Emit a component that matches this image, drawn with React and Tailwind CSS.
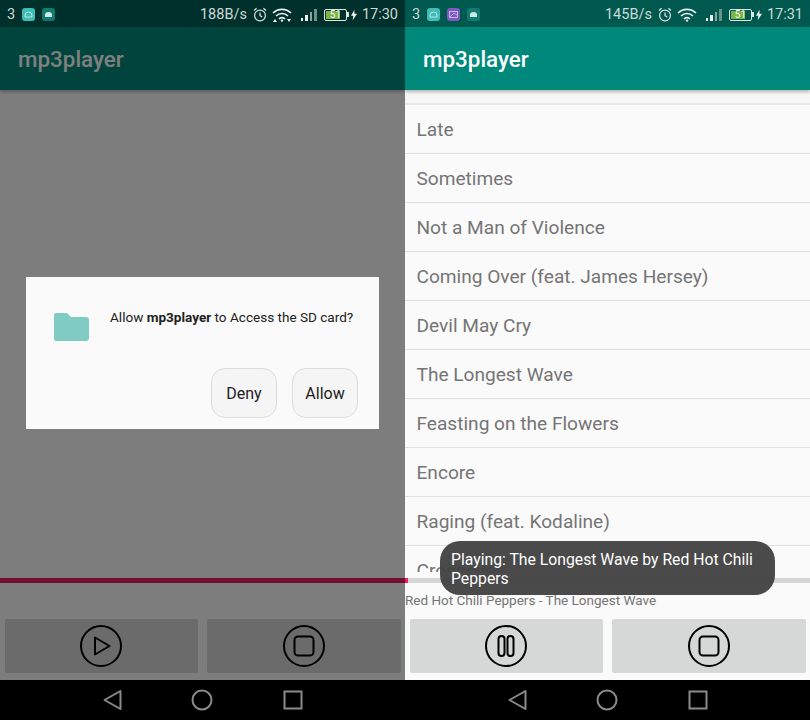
const SONGS = [
  'Late',
  'Sometimes',
  'Not a Man of Violence',
  'Coming Over (feat. James Hersey)',
  'Devil May Cry',
  'The Longest Wave',
  'Feasting on the Flowers',
  'Encore',
  'Raging (feat. Kodaline)',
  'Crossover',
]

function AppBadge({ color, children }) {
  return (
    <span className={`w-[13px] h-[13px] rounded-[3px] flex items-center justify-center ${color}`}>
      <svg width="9" height="7" viewBox="0 0 9 7">{children}</svg>
    </span>
  )
}

const CloudBadge = () => (
  <AppBadge color="bg-[#3fbcb5]">
    <path d="M1 6V4a3.5 3 0 0 1 7 0v2z" fill="none" stroke="#d8f2f0" strokeWidth="0.8" />
  </AppBadge>
)
const PhotoBadge = () => (
  <AppBadge color="bg-[#7e57c2]">
    <rect x="0.5" y="0.5" width="8" height="6" fill="none" stroke="#d8cdf0" strokeWidth="0.8" />
    <path d="M1 6l4-4 3 2" fill="none" stroke="#d8cdf0" strokeWidth="0.7" />
  </AppBadge>
)
const DroidBadge = () => (
  <AppBadge color="bg-[#127a70]">
    <path d="M1 6V4a3.5 3 0 0 1 7 0v2z" fill="#cfe9e5" />
  </AppBadge>
)

function StatusBar({ speed, time, badges, bg, activity }) {
  return (
    <div className={`h-[27px] pt-[2px] flex items-center justify-between px-[7px] text-[14.5px] text-[#cfd8d6] ${bg}`}>
      <div className="flex items-center gap-[7px]">
        <span>3</span>
        {badges.map((Badge, i) => (
          <Badge key={i} />
        ))}
      </div>
      <div className="flex items-center">
        <span>{speed}</span>
        <svg className="ml-[6px]" width="14" height="15" viewBox="0 0 14 15" fill="none" stroke="#dfe6e4" strokeWidth="1.2">
          <circle cx="7" cy="8.5" r="5.4" />
          <path d="M7 5.5v3.2l2.2 1.2M1 3.5l2.6-2.2M13 3.5l-2.6-2.2" />
        </svg>
        <svg className="ml-[5px]" width="20" height="14" viewBox="0 0 20 14" fill="none" stroke="#eef2f1" strokeWidth="1.6">
          <path d="M1 5a13 13 0 0 1 18 0M4 8a8.5 8.5 0 0 1 12 0M7 11a4 4 0 0 1 6 0" />
          <circle cx="10" cy="12.6" r="1.2" fill="#eef2f1" stroke="none" />
          {activity && <path d="M1 14l2-3 2 3zM15 11l2 3 2-3z" fill="#eef2f1" stroke="none" />}
        </svg>
        <span className="ml-[9px] flex items-end gap-[2px] h-[13px]">
          <i className="w-[2.5px] h-[3px] bg-[#eef2f1]" />
          <i className="w-[2.5px] h-[6px] bg-[#eef2f1]" />
          <i className="w-[2.5px] h-[9px] bg-[#8aa5a0]" />
          <i className="w-[2.5px] h-[12px] bg-[#6d8f89]" />
        </span>
        <span className="ml-[7px] w-[23px] h-[12px] border border-[#dfe6e4] rounded-[2px] p-[1px] flex relative">
          <span className="w-[14px] bg-[#7cb342]" />
          <span className="absolute inset-0 text-[10px] leading-[10px] text-center text-[#f5f5f5]">51</span>
        </span>
        <span className="w-[2px] h-[5px] bg-[#dfe6e4]" />
        <svg className="ml-[2px]" width="6" height="12" viewBox="0 0 7 12">
          <path d="M4 0L0 7h2.6L2 12l5-7.5H4z" fill="#eef2f1" />
        </svg>
        <span className="ml-[5px]">{time}</span>
      </div>
    </div>
  )
}

function AppBar() {
  return (
    <div className="h-[63px] pt-[2px] flex items-center pl-[18px] bg-[#00897b] shadow-[0_2px_3px_rgba(0,0,0,0.25)] relative z-10">
      <span className="text-[22.4px] font-medium text-white">mp3player</span>
    </div>
  )
}

function ControlButton({ children }) {
  return (
    <div className="flex-1 h-[54px] rounded-[2px] bg-[#d6d7d7] flex items-center justify-center">
      <svg width="44" height="44" viewBox="0 0 44 44" fill="none" stroke="#000" strokeWidth="2" strokeLinejoin="round">
        <circle cx="22" cy="22" r="20" />
        {children}
      </svg>
    </div>
  )
}

const PlayIcon = () => <path d="M16 13.5v17l14.5-8.5z" />
const PauseIcon = () => (
  <>
    <rect x="14.5" y="12" width="6" height="20" rx="3" />
    <rect x="23.5" y="12" width="6" height="20" rx="3" />
  </>
)
const StopIcon = () => <rect x="12.5" y="12.5" width="19" height="19" rx="3.5" />

function NavBar() {
  return (
    <div className="h-[40px] bg-black flex items-center justify-center relative z-30">
      <div className="flex items-center gap-[70px] ml-[-1px]">
        <svg className="overflow-visible" width="20" height="22" viewBox="0 0 20 22" fill="none" stroke="#8b8b8b" strokeWidth="2" strokeLinejoin="round">
          <path d="M19.5 2v18L3.5 11z" />
        </svg>
        <svg width="22" height="22" viewBox="0 0 22 22" fill="none" stroke="#8b8b8b" strokeWidth="2">
          <circle cx="11" cy="11" r="9.5" />
        </svg>
        <svg width="20" height="20" viewBox="0 0 20 20" fill="none" stroke="#8b8b8b" strokeWidth="2">
          <rect x="1.5" y="1.5" width="17" height="17" />
        </svg>
      </div>
    </div>
  )
}

function PermissionDialog() {
  return (
    <div className="absolute inset-x-0 top-[27px] bottom-0 z-20 bg-black/50 flex items-start justify-center pt-[250px]">
      <div className="w-[353px] h-[152px] bg-[#fafafa] pt-[29px] px-[21px]">
        <div className="flex">
          <svg className="ml-[7px] mt-[7px] shrink-0" width="35" height="28" viewBox="0 0 35 28">
            <path d="M2 0h11l4 4h15a3 3 0 0 1 3 3v18a3 3 0 0 1-3 3H2a2 2 0 0 1-2-2V2a2 2 0 0 1 2-2z" fill="#80cbc4" />
          </svg>
          <p className="ml-[21px] text-[13.55px] leading-[22px] text-[#212121] whitespace-nowrap">
            Allow <b className="font-bold">mp3player</b> to Access the SD card?
          </p>
        </div>
        <div className="mt-[27px] flex justify-end gap-[15px]">
          <button className="w-[66px] h-[50px] pt-[2px] rounded-[14px] border border-[#dcdcdc] bg-[#f5f5f5] text-[16px] text-[#212121]">Deny</button>
          <button className="w-[66px] h-[50px] pt-[2px] rounded-[14px] border border-[#dcdcdc] bg-[#f5f5f5] text-[16px] text-[#212121]">Allow</button>
        </div>
      </div>
    </div>
  )
}

function PlayerControls({ caption, progress, track, action }) {
  return (
    <div className="h-[108px] pt-[6px] shrink-0 bg-[#fafafa]">
      <div className={`h-[5px] ${track}`}>
        <div className={`h-full ${progress}`} />
      </div>
      <div className="h-[36px] text-[13.5px] leading-[34px] text-[#757575] whitespace-nowrap">{caption}</div>
      <div className="flex gap-[9px] px-[4.5px]">
        <ControlButton>{action}</ControlButton>
        <ControlButton>
          <StopIcon />
        </ControlButton>
      </div>
    </div>
  )
}

function Phone({ children, statusProps }) {
  return (
    <div className="relative w-[405px] h-[720px] flex flex-col overflow-hidden bg-[#fafafa]">
      <StatusBar {...statusProps} />
      <AppBar />
      {children}
      <NavBar />
    </div>
  )
}

export default function App() {
  return (
    <div className="w-[810px] h-[720px] flex font-['Roboto',sans-serif]">
      <Phone statusProps={{ speed: '188B/s', time: '17:30', badges: [CloudBadge, DroidBadge], bg: 'bg-[#00302b]', activity: true }}>
        <div className="h-[482px] shrink-0" />
        <PlayerControls caption="" track="bg-[#e91e63]" progress="w-full" action={<PlayIcon />} />
        <PermissionDialog />
      </Phone>

      <Phone statusProps={{ speed: '145B/s', time: '17:31', badges: [CloudBadge, PhotoBadge, DroidBadge], bg: 'bg-[#00594f]' }}>
        <div className="h-[482px] shrink-0 overflow-hidden">
          <div className="h-[15px] border-b-2 border-[#e8e8e8] bg-[#f6f6f6]" />
          {SONGS.map(song => (
            <div key={song} className="h-[49px] pt-[2px] flex items-center pl-[11.5px] border-b border-[#e0e0e0] text-[19.1px] text-[#757575] whitespace-nowrap">
              {song}
            </div>
          ))}
        </div>
        <PlayerControls
          caption="Red Hot Chili Peppers - The Longest Wave"
          track="bg-[#d6d6d6]"
          progress="w-[3px] bg-[#e91e63]"
          action={<PauseIcon />}
        />
        <div className="absolute left-[35px] top-[541px] w-[335px] h-[54px] rounded-[20px] bg-[#404040]/95 px-[11px] pt-[8.5px] text-[15.75px] leading-[19px] text-white z-20">
          Playing: The Longest Wave by Red Hot Chili Peppers
        </div>
      </Phone>
    </div>
  )
}
